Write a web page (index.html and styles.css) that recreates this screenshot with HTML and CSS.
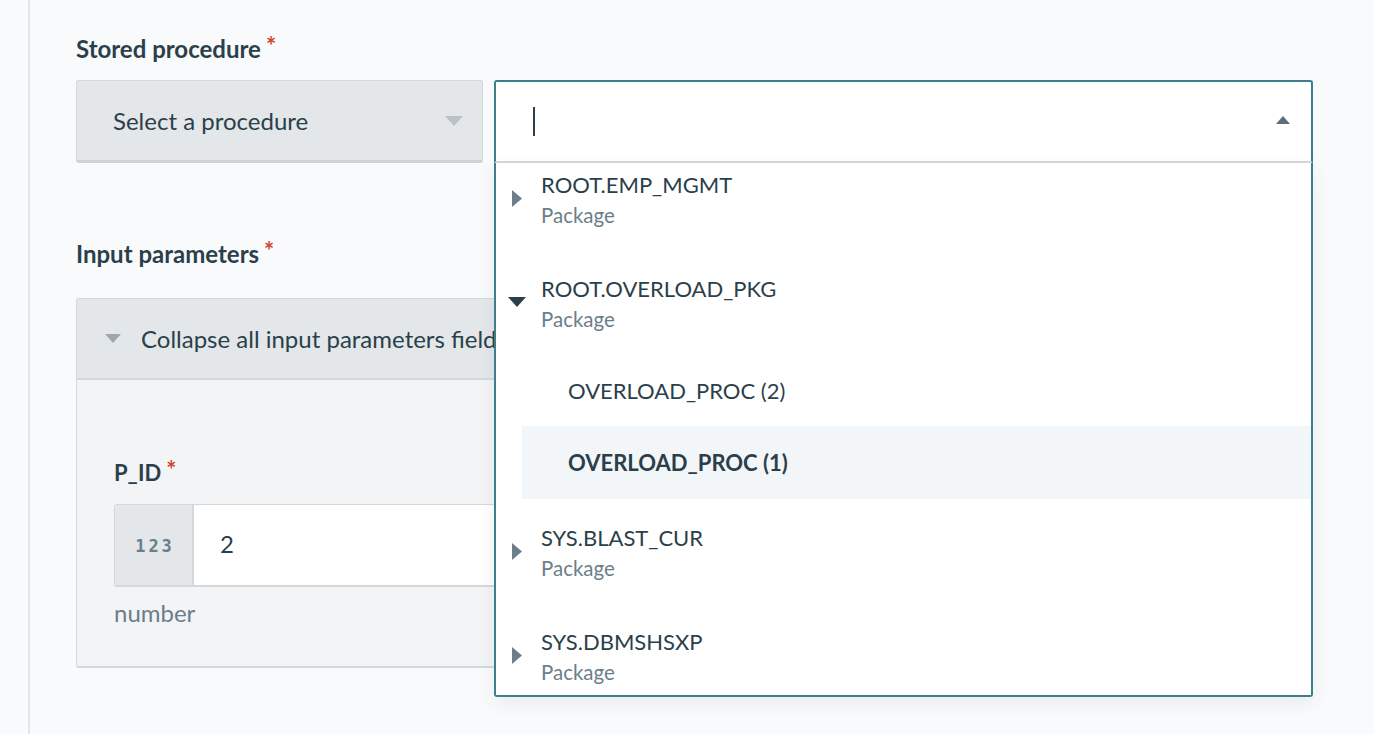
FILE: index.html
```html
<!DOCTYPE html>
<html lang="en">
<head>
<meta charset="utf-8">
<title>Stored procedure</title>
<link rel="stylesheet" href="styles.css">
</head>
<body>
<div class="sidebar"></div>
<main class="main">
  <div class="field-label">Stored procedure<span class="req">*</span></div>
  <div class="proc-row">
    <div class="select-box">
      <span class="select-text">Select a procedure</span>
      <svg class="select-caret" width="18" height="10" viewBox="0 0 18 10"><polygon points="0,0 18,0 9,10" fill="#b9c2c9"/></svg>
    </div>
    <div class="combo">
      <div class="combo-input">
        <span class="cursor"></span>
        <svg class="combo-caret" width="14" height="8" viewBox="0 0 14 8"><polygon points="0,8 14,8 7,0" fill="#5a6f7c"/></svg>
      </div>
      <div class="dropdown">
        <div class="dropdown-scroll">
          <div class="pkg">
            <svg class="tri-right" width="10" height="17" viewBox="0 0 10 17"><polygon points="0,0 10,8.5 0,17" fill="#6b7e8b"/></svg>
            <div class="pkg-text"><div class="pkg-name">ROOT.EMP_MGMT</div><div class="pkg-sub">Package</div></div>
          </div>
          <div class="pkg">
            <svg class="tri-down" width="18" height="10" viewBox="0 0 18 10"><polygon points="0,0 18,0 9,10" fill="#2b3f4b"/></svg>
            <div class="pkg-text"><div class="pkg-name">ROOT.OVERLOAD_PKG</div><div class="pkg-sub">Package</div></div>
          </div>
          <div class="proc">OVERLOAD_PROC (2)</div>
          <div class="proc proc-active">OVERLOAD_PROC (1)</div>
          <div class="pkg">
            <svg class="tri-right" width="10" height="17" viewBox="0 0 10 17"><polygon points="0,0 10,8.5 0,17" fill="#6b7e8b"/></svg>
            <div class="pkg-text"><div class="pkg-name">SYS.BLAST_CUR</div><div class="pkg-sub">Package</div></div>
          </div>
          <div class="pkg">
            <svg class="tri-right" width="10" height="17" viewBox="0 0 10 17"><polygon points="0,0 10,8.5 0,17" fill="#6b7e8b"/></svg>
            <div class="pkg-text"><div class="pkg-name">SYS.DBMSHSXP</div><div class="pkg-sub">Package</div></div>
          </div>
        </div>
      </div>
    </div>
  </div>

  <div class="field-label params-label">Input parameters<span class="req">*</span></div>
  <div class="panel">
    <div class="panel-head">
      <svg class="panel-caret" width="16" height="9" viewBox="0 0 16 9"><polygon points="0,0 16,0 8,9" fill="#9ba7b0"/></svg>
      <span>Collapse all input parameters fields</span>
    </div>
    <div class="panel-body">
      <div class="param-label">P_ID<span class="req">*</span></div>
      <div class="input-group">
        <div class="prefix">123</div>
        <div class="value">2</div>
      </div>
      <div class="hint">number</div>
    </div>
  </div>
</main>
</body>
</html>
```
FILE: styles.css
```css
* { box-sizing: border-box; }
html, body { margin: 0; height: 100%; }
body {
  background: #f9fafb;
  font-family: Lato, "Open Sans", sans-serif;
  color: #2b3f4b;
  display: flex;
  overflow: hidden;
}
.sidebar {
  width: 30px;
  flex: none;
  border-right: 2px solid #e4e7ea;
  height: 100%;
}
.main {
  flex: none;
  width: 1283px;
  padding: 34px 0 0 46px;
}
.field-label {
  font-size: 24px;
  font-weight: 700;
  line-height: 30px;
  height: 30px;
  color: #2b3f4b;
}
.req {
  color: #d0452f;
  font-size: 24px;
  font-weight: 700;
  vertical-align: top;
  margin-left: 5px;
  line-height: 24px;
}
.proc-row {
  display: flex;
  gap: 11px;
  margin-top: 16px;
  height: 83px;
}
.select-box {
  width: 407px;
  height: 83px;
  background: #e4e7ea;
  border: 1px solid #d3d8dc;
  border-bottom: 3px solid #ccd2d7;
  border-radius: 3px;
  display: flex;
  align-items: center;
  padding: 0 19px 0 36px;
  justify-content: space-between;
}
.select-text { font-size: 24px; color: #2b3f4b; }
.combo {
  width: 819px;
  position: relative;
}
.combo-input {
  height: 83px;
  background: #fff;
  border: 2px solid #3d7f8a;
  border-bottom: 2px solid #d5d8dc;
  border-radius: 3px 3px 0 0;
  display: flex;
  align-items: center;
  justify-content: space-between;
  padding: 0 21px 0 37px;
}
.cursor {
  width: 2px;
  height: 29px;
  background: #2b3f4b;
}
.combo-caret { margin-top: -4px; }
.dropdown {
  position: absolute;
  left: 0;
  top: 83px;
  width: 819px;
  height: 534px;
  background: #fff;
  border: 2px solid #3d7f8a;
  border-top: none;
  border-radius: 0 0 3px 3px;
  box-shadow: 0 6px 18px rgba(40, 60, 80, 0.08);
  overflow: hidden;
  z-index: 2;
}
.dropdown-scroll { margin-top: -17px; }
.pkg {
  height: 104px;
  display: flex;
  align-items: center;
  position: relative;
  padding-left: 45px;
}
.pkg-text { padding-top: 3px; }
.tri-right { position: absolute; left: 16px; top: 44px; }
.tri-down { position: absolute; left: 12px; top: 47px; }
.pkg-name { font-size: 22px; line-height: 31px; color: #2b3f4b; }
.pkg-sub { font-size: 20.5px; line-height: 31px; color: #6b7e8b; }
.proc {
  margin-left: 26px;
  height: 72px;
  display: flex;
  align-items: center;
  padding-left: 46px;
  font-size: 22px;
  color: #2b3f4b;
}
.proc-active {
  height: 73px;
  background: #f3f6f8;
  font-weight: 700;
}
.params-label { margin-top: 76px; }
.panel {
  margin-top: 29px;
  width: 1237px;
  border: 1px solid #d3d8dc;
  border-bottom-width: 2px;
  border-radius: 3px;
  background: #f3f4f6;
}
.panel-head {
  height: 81px;
  background: #e4e7ea;
  border-bottom: 2px solid #d3d8dc;
  display: flex;
  align-items: center;
  padding-left: 28px;
  font-size: 24px;
  color: #2b3f4b;
}
.panel-caret { margin-right: 20px; }
.panel-body {
  padding: 78px 0 38px 37px;
}
.param-label {
  font-size: 22px;
  font-weight: 700;
  line-height: 30px;
  color: #2b3f4b;
}
.input-group {
  margin-top: 16px;
  height: 83px;
  display: flex;
  border: 1px solid #d3d8dc;
  border-bottom-width: 2px;
  border-radius: 3px;
  width: 1160px;
  background: #fff;
  overflow: hidden;
}
.prefix {
  width: 79px;
  background: #e4e7ea;
  border-right: 2px solid #d3d8dc;
  display: flex;
  align-items: center;
  justify-content: center;
  font-family: "DejaVu Sans Mono", monospace;
  font-weight: 700;
  font-size: 17px;
  letter-spacing: 3px;
  color: #6b7e8b;
  padding: 2px 0 0 3px;
}
.value {
  display: flex;
  align-items: center;
  padding-left: 26px;
  font-size: 24px;
  color: #2b3f4b;
  padding-bottom: 4px;
}
.hint {
  margin-top: 11px;
  font-size: 24px;
  line-height: 30px;
  color: #6b7e8b;
}
```
